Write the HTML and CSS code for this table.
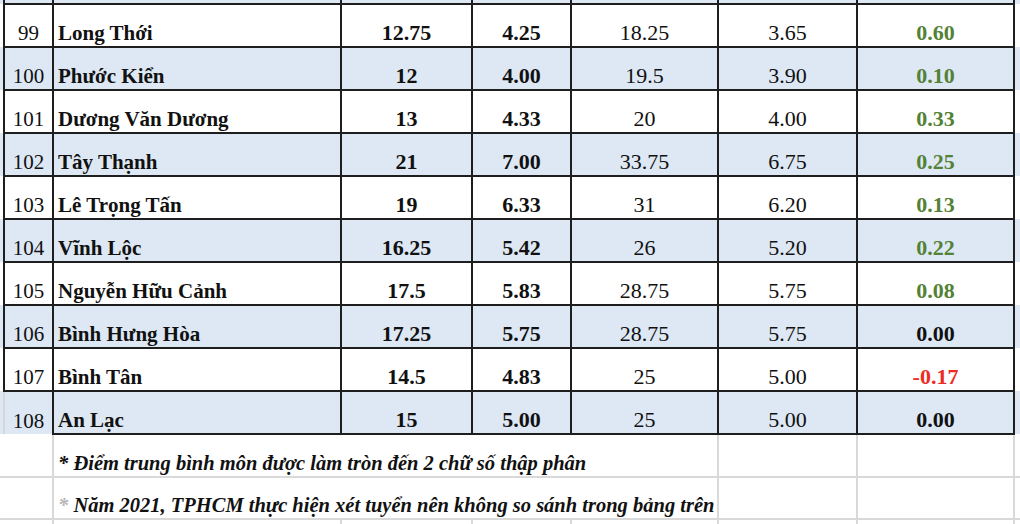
FILE: index.html
```html
<!DOCTYPE html>
<html lang="vi">
<head>
<meta charset="utf-8">
<title>Bảng điểm</title>
<link rel="stylesheet" href="styles.css">
</head>
<body>
<table class="grid">
<colgroup>
<col class="c-edge-l"><col class="c-no"><col class="c-name"><col class="c-v1"><col class="c-v2"><col class="c-v3"><col class="c-v4"><col class="c-v5"><col class="c-edge-r">
</colgroup>
<tbody>
<tr class="strip blue">
<td class="edge"></td><td class="sc"></td><td class="sc"></td><td class="sc"></td><td class="sc"></td><td class="sc"></td><td class="sc"></td><td class="sc"></td><td class="edge"></td>
</tr>
<tr class="row">
<td class="edge"></td><td class="t no">99</td><td class="t name">Long Thới</td><td class="t b">12.75</td><td class="t b">4.25</td><td class="t r">18.25</td><td class="t r">3.65</td><td class="t b up">0.60</td><td class="edge"></td>
</tr>
<tr class="row blue">
<td class="edge"></td><td class="t no">100</td><td class="t name">Phước Kiển</td><td class="t b">12</td><td class="t b">4.00</td><td class="t r">19.5</td><td class="t r">3.90</td><td class="t b up">0.10</td><td class="edge"></td>
</tr>
<tr class="row">
<td class="edge"></td><td class="t no">101</td><td class="t name">Dương Văn Dương</td><td class="t b">13</td><td class="t b">4.33</td><td class="t r">20</td><td class="t r">4.00</td><td class="t b up">0.33</td><td class="edge"></td>
</tr>
<tr class="row blue">
<td class="edge"></td><td class="t no">102</td><td class="t name">Tây Thạnh</td><td class="t b">21</td><td class="t b">7.00</td><td class="t r">33.75</td><td class="t r">6.75</td><td class="t b up">0.25</td><td class="edge"></td>
</tr>
<tr class="row">
<td class="edge"></td><td class="t no">103</td><td class="t name">Lê Trọng Tấn</td><td class="t b">19</td><td class="t b">6.33</td><td class="t r">31</td><td class="t r">6.20</td><td class="t b up">0.13</td><td class="edge"></td>
</tr>
<tr class="row blue">
<td class="edge"></td><td class="t no">104</td><td class="t name">Vĩnh Lộc</td><td class="t b">16.25</td><td class="t b">5.42</td><td class="t r">26</td><td class="t r">5.20</td><td class="t b up">0.22</td><td class="edge"></td>
</tr>
<tr class="row">
<td class="edge"></td><td class="t no">105</td><td class="t name">Nguyễn Hữu Cảnh</td><td class="t b">17.5</td><td class="t b">5.83</td><td class="t r">28.75</td><td class="t r">5.75</td><td class="t b up">0.08</td><td class="edge"></td>
</tr>
<tr class="row blue">
<td class="edge"></td><td class="t no">106</td><td class="t name">Bình Hưng Hòa</td><td class="t b">17.25</td><td class="t b">5.75</td><td class="t r">28.75</td><td class="t r">5.75</td><td class="t b">0.00</td><td class="edge"></td>
</tr>
<tr class="row">
<td class="edge"></td><td class="t no">107</td><td class="t name">Bình Tân</td><td class="t b">14.5</td><td class="t b">4.83</td><td class="t r">25</td><td class="t r">5.00</td><td class="t b down">-0.17</td><td class="edge"></td>
</tr>
<tr class="row blue">
<td class="edge"></td><td class="t no open">108</td><td class="t name">An Lạc</td><td class="t b">15</td><td class="t b">5.00</td><td class="t r">25</td><td class="t r">5.00</td><td class="t b">0.00</td><td class="edge"></td>
</tr>
<tr class="row note-row">
<td class="edge ge"></td><td class="g"></td><td class="g note" colspan="4">* Điểm trung bình môn được làm tròn đến 2 chữ số thập phân</td><td class="g"></td><td class="g"></td><td class="edge ge"></td>
</tr>
<tr class="row2 note-row">
<td class="edge ge"></td><td class="g"></td><td class="g note" colspan="4"><span class="faded">*</span> Năm 2021, TPHCM thực hiện xét tuyển nên không so sánh trong bảng trên</td><td class="g"></td><td class="g"></td><td class="edge ge"></td>
</tr>
<tr class="tail">
<td class="edge"></td><td class="g"></td><td class="g"></td><td class="g"></td><td class="g"></td><td class="g"></td><td class="g"></td><td class="g"></td><td class="edge"></td>
</tr>
</tbody>
</table>
</body>
</html>
```

FILE: styles.css
```css
html, body {
  margin: 0;
  padding: 0;
  background: #ffffff;
}

body {
  width: 1020px;
  height: 524px;
  overflow: hidden;
  font-family: "Liberation Serif", "Times New Roman", serif;
  color: #111111;
}

.grid {
  border-collapse: collapse;
  table-layout: fixed;
  width: 1020px;
}

.c-edge-l { width: 4px; }
.c-no { width: 49px; }
.c-name { width: 288px; }
.c-v1 { width: 131px; }
.c-v2 { width: 99px; }
.c-v3 { width: 147px; }
.c-v4 { width: 139px; }
.c-v5 { width: 157px; }
.c-edge-r { width: 6px; }

.grid td {
  padding: 0 0 1px 0;
  vertical-align: bottom;
  font-size: 22px;
  line-height: 24px;
  white-space: nowrap;
  overflow: hidden;
}

.grid .strip td {
  padding: 0;
  line-height: 0;
  font-size: 0;
}

.grid .strip .sc {
  border-left: 2px solid #1e1e1e;
  border-right: 2px solid #1e1e1e;
  border-bottom: 2px solid #1e1e1e;
}

.strip { height: 4px; }
.row { height: 43px; }
.row2 { height: 42px; }
.tail { height: 6px; }

.blue td { background: #dde8f4; }

.grid .t {
  border: 2px solid #1e1e1e;
}

.grid .no {
  text-align: center;
  font-weight: 400;
  font-size: 21px;
}

.grid .no.open {
  border-left: 2px solid #d6d6d6;
  border-bottom: none;
  border-right: none;
}

.grid .name {
  text-align: left;
  font-weight: 700;
  font-size: 21px;
  padding-left: 4px;
}

.grid .b {
  text-align: center;
  font-weight: 700;
}

.grid .r {
  text-align: center;
  font-weight: 400;
}

.up { color: #548235; }
.down { color: #ee2a22; }

.grid .g {
  border-right: 2px solid #d9d9d9;
  border-bottom: 2px solid #d9d9d9;
}

.grid .ge {
  border-bottom: 2px solid #d9d9d9;
}

.grid .note {
  font-size: 20.5px;
  font-weight: 700;
  font-style: italic;
  padding-left: 4px;
  overflow: visible;
}

.faded { color: #b8b8b8; }

.grid .edge { padding: 0; }
```
